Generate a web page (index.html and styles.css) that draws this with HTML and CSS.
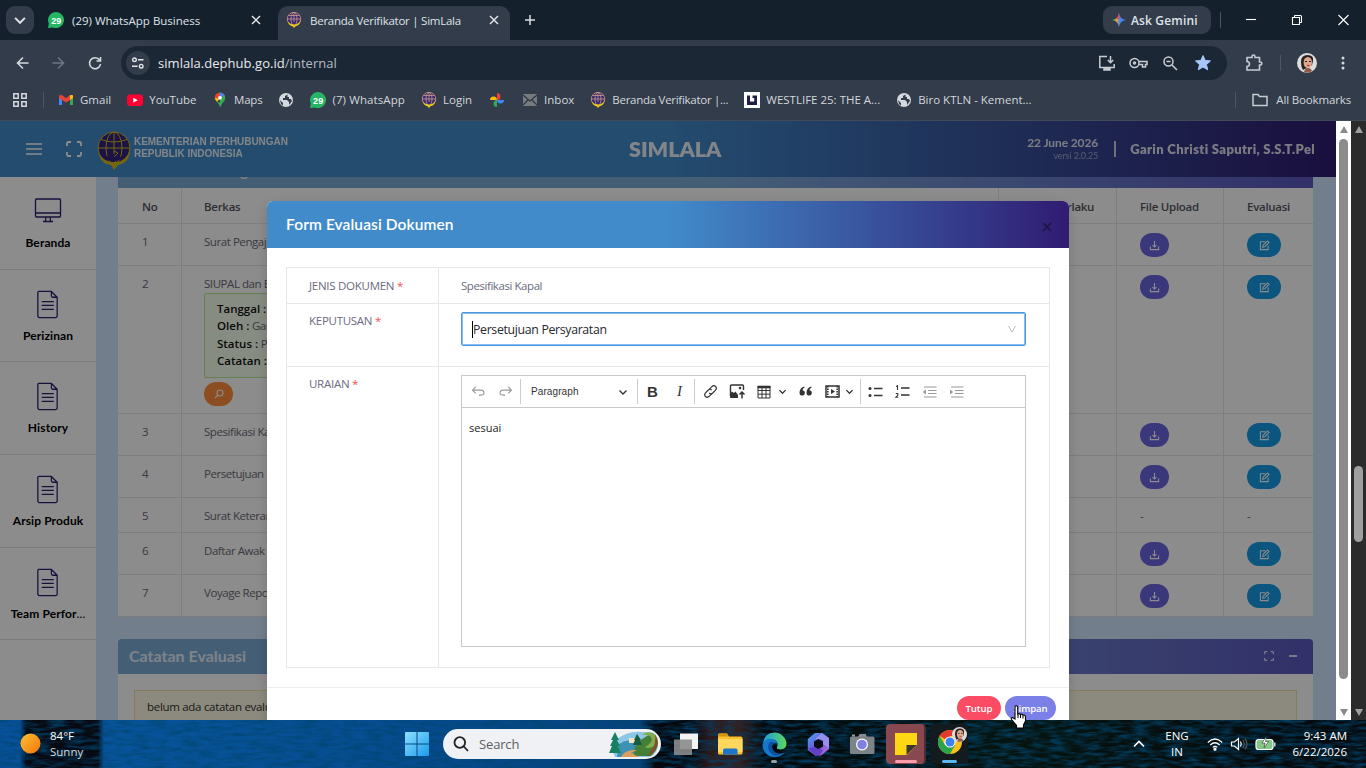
FILE: index.html
```html
<!DOCTYPE html>
<html lang="id">
<head>
    <meta charset="UTF-8">
    <title>Beranda Verifikator | SimLala</title>
    <link rel="stylesheet" href="styles.css">
</head>
<body>
    <!-- icons -->
    <svg class="defs" width="0" height="0">
        <defs>
            <linearGradient id="g-win" x1="0" y1="0" x2="1" y2="1"><stop offset="0" stop-color="#8fe0ff"/><stop offset="1" stop-color="#1a9bea"/></linearGradient>
            <linearGradient id="g-edge" x1="0" y1="0" x2="1" y2="0"><stop offset="0" stop-color="#1b9de2"/><stop offset="1" stop-color="#5fd65a"/></linearGradient>
            <linearGradient id="g-m365" x1="0" y1="0" x2="1" y2="1"><stop offset="0" stop-color="#4aa3f0"/><stop offset=".5" stop-color="#6a5bd8"/><stop offset="1" stop-color="#c46be0"/></linearGradient>
            <linearGradient id="g-gem" x1="0" y1="0" x2="1" y2="0"><stop offset="0" stop-color="#34a853"/><stop offset=".35" stop-color="#e8a33a"/><stop offset=".55" stop-color="#4285f4"/><stop offset="1" stop-color="#4285f4"/></linearGradient>
            <linearGradient id="g-sun" x1="0" y1="0" x2="1" y2="1"><stop offset="0" stop-color="#fcc02e"/><stop offset="1" stop-color="#f3750f"/></linearGradient>
        </defs>
        <symbol id="seal" viewBox="0 0 34 39">
            <circle cx="17" cy="17" r="16" fill="#33247d"/>
            <g fill="none" stroke="#d6b91c" stroke-width="1">
                <circle cx="17" cy="17" r="16"/>
                <ellipse cx="17" cy="17" rx="8" ry="16"/>
                <path d="M17 1v22M1 17h32M4 8.500q13 5 26 0"/>
                <path d="M17 20l4 2-4 4 3 3-4 4"/>
            </g>
            <path d="M1 19q2 14 13 15l3 5 4-5q12-2 12-16-3 12-14 13-14 1-18-12z" fill="#d6b91c"/>
            <path d="M5 24q5 7 13 6 8-1 12-8-3 4-9 4-8 0-16-2z" fill="#33247d"/>
        </symbol>
        <symbol id="seal-sm" viewBox="0 0 16 16">
            <circle cx="8" cy="7" r="6.700" fill="#3b2873"/>
            <g fill="none" stroke="#c99c86" stroke-width=".8">
                <circle cx="8" cy="7" r="6.700"/>
                <ellipse cx="8" cy="7" rx="3" ry="6.700"/>
                <path d="M8 0v10M1.300 7h13.400M2.500 3.500h11"/>
            </g>
            <path d="M1.500 9q1.500 5 5 5.300L8 16l1.500-1.700Q14.500 13 14.700 7.500q-1.500 4.500-6 5Q4 12.500 1.500 9z" fill="#e6c71c"/>
        </symbol>
        <symbol id="wa" viewBox="0 0 16 16">
            <path d="M8 0a8 8 0 1 1-3 15.400L0 16l.8-4.600A8 8 0 0 1 8 0z" fill="#25b564"/>
            <text x="8.200" y="11.500" text-anchor="middle" class="wa-num">29</text>
        </symbol>
        <symbol id="globe" viewBox="0 0 16 16">
            <circle cx="8" cy="8" r="7" fill="#d5d9df"/>
            <path d="M9.500 2.500 7 4v2H5v2h4l2 2v3l3-4-1-2h-2V5H9.500zM2 8l3 3v2.500L3 12z" fill="#323c4a"/>
        </symbol>
        <symbol id="close" viewBox="0 0 10 10"><path d="M1 1l8 8M9 1 1 9" fill="none" stroke="currentColor" stroke-width="1.500"/></symbol>
        <symbol id="doc" viewBox="0 0 24 30">
            <path d="M2.500 1.500h13l6 6V27a1.500 1.500 0 0 1-1.500 1.500H3A1.500 1.500 0 0 1 1.500 27V2.500a1 1 0 0 1 1-1zM15.500 1.500V6q0 1.500 1.500 1.500h4.500M5.500 12H18M5.500 16H18M5.500 20H18" fill="none" stroke="currentColor" stroke-width="1.300"/>
        </symbol>
        <symbol id="download" viewBox="0 0 12 12">
            <path d="M1.500 7v3.500h9V7M6 1v6.500M3.800 5.500 6 7.700l2.200-2.200" fill="none" stroke="currentColor" stroke-width="1.200"/>
        </symbol>
        <symbol id="edit" viewBox="0 0 12 12">
            <path d="M7 2H1.500v8.500H10V6M4 8l.5-2.200L9.300 1l1.700 1.700-4.800 4.800z" fill="none" stroke="currentColor" stroke-width="1.100"/>
        </symbol>
        <symbol id="full" viewBox="0 0 16 16">
            <path d="M1 5V2.500A1.500 1.500 0 0 1 2.500 1H5M11 1h2.500A1.500 1.500 0 0 1 15 2.500V5M15 11v2.500a1.500 1.500 0 0 1-1.500 1.500H11M5 15H2.500A1.500 1.500 0 0 1 1 13.500V11" fill="none" stroke="currentColor" stroke-width="1.800"/>
        </symbol>
        <symbol id="down" viewBox="0 0 10 10"><path d="M1.500 3.500 5 7l3.500-3.500" fill="none" stroke="currentColor" stroke-width="1.400"/></symbol>
        <symbol id="undo" viewBox="0 0 16 12"><path d="M5 1 1.500 4.500 5 8M1.500 4.500H10q4 0 4 3.200Q14 10 10 10H8.500" fill="none" stroke="currentColor" stroke-width="1.200"/></symbol>
        <symbol id="face" viewBox="0 0 20 20">
            <circle cx="10" cy="10" r="10" fill="#dcdcdc"/>
            <path d="M4 9q0-7 6.500-7T16 8l-1 4-9 5Q4 14 4 9z" fill="#2b211f"/>
            <ellipse cx="10.800" cy="9.500" rx="4.200" ry="5.600" fill="#dba98d"/>
            <path d="M7 19q1-4 4-4t4 3q-4 3-8 1z" fill="#8c5b48"/>
            <path d="M8 8.500h2M12 8.500h2" stroke="#2b211f"/>
            <path d="M10 12.500h2.500" stroke="#b9303c" stroke-width="1.200"/>
        </symbol>
    </svg>

    <!-- browser tabs -->
    <div class="tabs">
        <span class="tab-search"><svg width="14" height="14"><use href="#down"/></svg></span>
        <div class="tab">
            <svg width="16" height="16"><use href="#wa"/></svg>
            <span class="tab-title">(29) WhatsApp Business</span>
            <svg class="tab-x" width="10" height="10"><use href="#close"/></svg>
        </div>
        <div class="tab active">
            <svg width="16" height="16"><use href="#seal-sm"/></svg>
            <span class="tab-title">Beranda Verifikator | SimLala</span>
            <svg class="tab-x" width="10" height="10"><use href="#close"/></svg>
        </div>
        <svg class="tab-new" width="12" height="12" viewBox="0 0 12 12"><path d="M6 1v10M1 6h10" stroke="#d9dde3" stroke-width="1.500"/></svg>
        <div class="gemini">
            <svg width="14" height="14" viewBox="0 0 14 14"><path d="M7 0q.8 6.200 7 7-6.200.8-7 7-.8-6.200-7-7 6.200-.8 7-7z" fill="url(#g-gem)"/><path d="M7 0q-.6 4-3 5.500L7 6z" fill="#ea4335"/></svg>
            <span>Ask Gemini</span>
        </div>
        <i class="sep tab-sep"></i>
        <svg class="win-btns" width="104" height="14" viewBox="0 0 104 14" fill="none" stroke="#fff" stroke-width="1.100">
            <path d="M0 6.500h10"/>
            <path d="M46.500 4.500h7v7h-7zM48.500 4.500V3q0-.5.5-.5h5.500q1 0 1 1V9q0 .5-.5.5h-1.500"/>
            <path d="M92.500 2l10 10M102.500 2l-10 10"/>
        </svg>
    </div>

    <div class="toolbar">
        <svg class="nav" width="90" height="16" viewBox="0 0 90 16" fill="none" stroke="#d5d9df" stroke-width="1.600">
            <path d="M13.500 8h-11M8 2.500 2.500 8 8 13.500"/>
            <path d="M37.500 8h11M43 2.500 48.500 8 43 13.500" stroke="#6d7683"/>
            <path d="M84.500 5A5.500 5.500 0 1 0 85.500 9M85.500 2v4h-4"/>
        </svg>
        <div class="omnibox">
            <span class="site"><svg width="14" height="14" viewBox="0 0 14 14" fill="none" stroke="#e3e6ea" stroke-width="1.400"><circle cx="3.500" cy="3.800" r="1.800"/><path d="M7 3.800h5.500M1 10.200h5.500"/><circle cx="10.200" cy="10.200" r="1.800"/></svg></span>
            <span class="url">simlala.dephub.go.id<em>/internal</em></span>
            <svg class="omni-icons" width="114" height="18" viewBox="0 0 114 18" fill="none" stroke="#c7ccd3" stroke-width="1.500">
                <path d="M9 2.500H1.800v11h14.400V10M12.500 2v6.500M9.800 6l2.700 2.700L15.200 6"/><path d="M6 14.500h6v1.500H6z" fill="#c7ccd3"/>
                <circle cx="36.500" cy="9" r="4.500"/><circle cx="36.500" cy="9" r="1"/><path d="M41 7.500h8v3h-1.500V13h-3v-2.500H41"/>
                <circle cx="70.500" cy="7.500" r="4.500"/><path d="M74 11l5 5M68.500 7.500h4"/>
                <path d="M105 1.500l2.200 5 5.300.4-4 3.600 1.200 5.300-4.700-2.800-4.700 2.800 1.200-5.300-4-3.600 5.300-.4z" fill="#a8c7fa" stroke="#a8c7fa" stroke-width="1"/>
            </svg>
        </div>
        <svg class="ext" width="18" height="18" viewBox="0 0 18 18" fill="none" stroke="#c7ccd3" stroke-width="1.600"><path d="M2 3.500h5V2.500a1.500 1.500 0 0 1 3 0v1h4.500V8h.8a1.500 1.500 0 0 1 0 3h-.8v5H2v-3.500q2.500-.3 2.500-2.500T2 7.500z"/></svg>
        <i class="sep"></i>
        <svg class="avatar" width="20" height="20"><use href="#face"/></svg>
        <svg class="dots" width="4" height="14" viewBox="0 0 4 14" fill="#d5d9df"><circle cx="2" cy="2" r="1.500"/><circle cx="2" cy="7" r="1.500"/><circle cx="2" cy="12" r="1.500"/></svg>
    </div>

    <div class="bookmarks">
        <svg width="14" height="14" viewBox="0 0 14 14" fill="none" stroke="#d5d9df" stroke-width="1.500"><path d="M.8.8h4.400v4.400H.8zM8.800.8h4.400v4.400H8.800zM.8 8.800h4.400v4.400H.8zM8.800 8.800h4.400v4.400H8.800z"/></svg>
        <i class="sep bm-sep"></i>
        <span class="bm bm-gmail"><svg width="16" height="16" viewBox="0 0 16 16"><path d="M1 3.500V13h3V6z" fill="#4285f4"/><path d="M15 3.500V13h-3V6z" fill="#34a853"/><path d="M1 3.500 4 3l4 3.200L12 3l3 .5V6L8 10.500 1 6z" fill="#ea4335"/><path d="M12 3l3 .2V6l-3 2z" fill="#fbbc04"/></svg><b>Gmail</b></span>
        <span class="bm bm-yt"><svg width="16" height="16" viewBox="0 0 16 16"><rect y="2.500" width="16" height="11.500" rx="3" fill="#f03"/><path d="M6.300 5.700v5l4.500-2.500z" fill="#fff"/></svg><b>YouTube</b></span>
        <span class="bm bm-maps"><svg width="16" height="16" viewBox="0 0 16 16"><path d="M8 .5A5.300 5.300 0 0 1 13.300 6Q13 9 10.500 11L8 15.500z" fill="#34a853"/><path d="M8 .5A5.300 5.300 0 0 0 2.700 5.800L8 6z" fill="#ea4335"/><path d="M8 .5a5.300 5.300 0 0 1 4.600 2.700L8 6z" fill="#4285f4"/><path d="M2.700 5.800Q3 8 5 10l3-3.500z" fill="#fbbc04"/><path d="M5 10q2.500 2.500 3 5.500l1-5z" fill="#34a853"/><circle cx="8" cy="5.800" r="1.900" fill="#fff"/></svg><b>Maps</b></span>
        <span class="bm"><svg width="16" height="16"><use href="#globe"/></svg></span>
        <span class="bm bm-wa"><svg width="16" height="16"><use href="#wa"/></svg><b>(7) WhatsApp</b></span>
        <span class="bm bm-login"><svg width="16" height="16"><use href="#seal-sm"/></svg><b>Login</b></span>
        <span class="bm bm-photos"><svg width="16" height="16" viewBox="0 0 16 16"><path d="M8 8V1a3.500 3.500 0 0 1 0 7z" fill="#ea4335"/><path d="M8 8h7a3.500 3.500 0 0 1-7 0z" fill="#4285f4"/><path d="M8 8v7a3.500 3.500 0 0 1 0-7z" fill="#34a853"/><path d="M8 8H1a3.500 3.500 0 0 1 7 0z" fill="#fbbc04"/></svg></span>
        <span class="bm bm-inbox"><svg width="16" height="16" viewBox="0 0 16 16"><path d="M1 2h14v12H1z" fill="#777b80"/><path d="M1 3l7 6 7-6M1 13l5-5M15 13l-5-5" fill="none" stroke="#303741" stroke-width="1.200"/></svg><b>Inbox</b></span>
        <span class="bm bm-ber"><svg width="16" height="16"><use href="#seal-sm"/></svg><b>Beranda Verifikator |...</b></span>
        <span class="bm bm-west"><svg width="16" height="16" viewBox="0 0 16 16"><path d="M0 0h16v16H0z" fill="#fff"/><path d="M3 3.500h10V13H3z" fill="#1d1f45"/><path d="M6 3v6.500h4.200V6H8.500V3z" fill="#fff"/><path d="M7.300 3v5H9" fill="none" stroke="#fff" stroke-width="1.500"/></svg><b>WESTLIFE 25: THE A...</b></span>
        <span class="bm bm-biro"><svg width="16" height="16"><use href="#globe"/></svg><b>Biro KTLN - Kement...</b></span>
        <i class="sep bm-right"></i>
        <span class="bm bm-all"><svg width="16" height="14" viewBox="0 0 16 14" fill="none" stroke="#c7ccd3" stroke-width="1.500"><path d="M1 12.500V1.500h5l1.500 2H15v9z"/></svg><b>All Bookmarks</b></span>
    </div>

    <div class="viewport">
        <div class="page">
            <div class="head">
                <svg class="burger" width="16" height="12" viewBox="0 0 16 12"><path d="M0 1h16M0 6h16M0 11h16" stroke="currentColor" stroke-width="1.500"/></svg>
                <svg class="head-full" width="16" height="16"><use href="#full"/></svg>
                <svg class="head-logo" width="34" height="39"><use href="#seal"/></svg>
                <div class="ministry">KEMENTERIAN PERHUBUNGAN<br>REPUBLIK INDONESIA</div>
                <h1>SIMLALA</h1>
                <div class="date">22 June 2026<small>versi 2.0.25</small></div>
                <i class="bar"></i>
                <div class="user">Garin Christi Saputri, S.S.T.Pel</div>
            </div>
            <div class="main">
                <div class="side">
                    <a class="item"><svg width="28" height="29" viewBox="0 0 28 29"><path d="M2.500 2h23q1 0 1 1v16q0 1-1 1h-23q-1 0-1-1V3q0-1 1-1zM1.500 16h25M12 20l-.5 4M16 20l.5 4M9 24.500h10" fill="none" stroke="currentColor" stroke-width="1.300"/></svg><span>Beranda</span></a>
                    <a class="item"><svg width="24" height="29"><use href="#doc"/></svg><span>Perizinan</span></a>
                    <a class="item"><svg width="24" height="29"><use href="#doc"/></svg><span>History</span></a>
                    <a class="item"><svg width="24" height="29"><use href="#doc"/></svg><span>Arsip Produk</span></a>
                    <a class="item"><svg width="24" height="29"><use href="#doc"/></svg><span>Team Perfor<em>...</em></span></a>
                </div>
                <div class="content">
                    <div class="card-top"><span>Data Pendukung</span></div>
                    <div class="berkas">
                        <div class="row th"><b>No</b><b>Berkas</b><b>Masa Berlaku</b><b>File Upload</b><b>Evaluasi</b></div>
                        <div class="row"><span>1</span><span>Surat Pengajuan</span><span></span><span><i class="btn dl"><svg width="11" height="11"><use href="#download"/></svg></i></span><span><i class="btn ed"><svg width="11" height="11"><use href="#edit"/></svg></i></span></div>
                        <div class="row tall"><span>2</span>
                            <span>SIUPAL dan Bukti
                                <div class="note"><b>Tanggal :</b><br><b>Oleh :</b> Garin<br><b>Status :</b> Proses<br><b>Catatan :</b></div>
                                <i class="btn find"><svg width="10" height="10" viewBox="0 0 10 10" fill="none" stroke="currentColor" stroke-width="1.100"><circle cx="6" cy="4" r="3"/><path d="M4 6 1 9"/></svg></i>
                            </span>
                            <span></span><span><i class="btn dl"><svg width="11" height="11"><use href="#download"/></svg></i></span><span><i class="btn ed"><svg width="11" height="11"><use href="#edit"/></svg></i></span></div>
                        <div class="row"><span>3</span><span>Spesifikasi Kapal</span><span></span><span><i class="btn dl"><svg width="11" height="11"><use href="#download"/></svg></i></span><span><i class="btn ed"><svg width="11" height="11"><use href="#edit"/></svg></i></span></div>
                        <div class="row"><span>4</span><span>Persetujuan Syah</span><span></span><span><i class="btn dl"><svg width="11" height="11"><use href="#download"/></svg></i></span><span><i class="btn ed"><svg width="11" height="11"><use href="#edit"/></svg></i></span></div>
                        <div class="row short"><span>5</span><span>Surat Keterangan</span><span></span><span>-</span><span>-</span></div>
                        <div class="row"><span>6</span><span>Daftar Awak Kapal</span><span></span><span><i class="btn dl"><svg width="11" height="11"><use href="#download"/></svg></i></span><span><i class="btn ed"><svg width="11" height="11"><use href="#edit"/></svg></i></span></div>
                        <div class="row"><span>7</span><span>Voyage Report</span><span></span><span><i class="btn dl"><svg width="11" height="11"><use href="#download"/></svg></i></span><span><i class="btn ed"><svg width="11" height="11"><use href="#edit"/></svg></i></span></div>
                    </div>
                    <div class="catatan">
                        <div class="catatan-head"><h2>Catatan Evaluasi</h2><svg width="10" height="10"><use href="#full"/></svg><i class="minus"></i></div>
                        <div class="catatan-body"><div class="alert">belum ada catatan evaluasi</div></div>
                    </div>
                </div>
            </div>
            <div class="mask"></div>
            <div class="modal">
                <div class="modal-head"><h3>Form Evaluasi Dokumen</h3><svg width="10" height="10"><use href="#close"/></svg></div>
                <div class="modal-body">
                    <div class="form">
                        <div class="lab r1">JENIS DOKUMEN <i>*</i></div><div class="val r1 name">Spesifikasi Kapal</div>
                        <div class="lab">KEPUTUSAN <i>*</i></div>
                        <div class="val"><div class="select"><u class="caret"></u><span>Persetujuan Persyaratan</span><svg width="10" height="10" viewBox="0 0 10 10"><path d="M1.500 2 5 8l3.500-6" fill="none" stroke="#bfbfbf"/></svg></div></div>
                        <div class="lab">URAIAN <i>*</i></div>
                        <div class="val">
                            <div class="editor">
                                <div class="tools">
                                    <svg class="off" width="15" height="11"><use href="#undo"/></svg>
                                    <svg class="off flip" width="15" height="11"><use href="#undo"/></svg>
                                    <i class="ts"></i>
                                    <span class="para">Paragraph</span>
                                    <svg class="dd" width="10" height="10"><use href="#down"/></svg>
                                    <i class="ts"></i>
                                    <strong class="tb">B</strong>
                                    <em class="ti">I</em>
                                    <i class="ts"></i>
                                    <svg class="w15" width="15" height="15" viewBox="0 0 15 15" fill="none" stroke="currentColor" stroke-width="1.200"><path d="M6.300 5.200 8.800 2.700q2-1.800 3.700-.2t0 3.700L9.700 9q-1.700 1.500-3.500 0"/><path d="M8.700 9.800l-2.500 2.500q-2 1.800-3.700.2t0-3.700L5.300 6Q7 4.500 8.800 6"/></svg>
                                    <svg class="w17" width="17" height="15" viewBox="0 0 17 15"><path d="M1.500 12V2q0-1 1-1h11q1 0 1 1v4" fill="none" stroke="currentColor" stroke-width="1.400"/><path d="M1 13.500V10l2-2.500 2 1.500 1.500-1.500L9 11v3H1.500z" fill="currentColor"/><circle cx="11" cy="4" r="1.300" fill="currentColor"/><path d="M13 14.500v-6M10.500 10.500 13 8l2.500 2.500" fill="none" stroke="currentColor" stroke-width="1.500"/></svg>
                                    <svg class="w14" width="14" height="14" viewBox="0 0 14 14" fill="none" stroke="currentColor"><path d="M1 1.500h12v11.500H1zM1 5.500h12M1 9.200h12M5 3v10M9 3v10"/><path d="M.5 2h13" stroke-width="2.600"/></svg>
                                    <svg class="dd2" width="9" height="9"><use href="#down"/></svg>
                                    <svg class="w13" width="13" height="11" viewBox="0 0 13 11" fill="currentColor"><path d="M5.500.5Q.5 1.500.5 7a2.700 2.700 0 1 0 3-2.800Q3.500 2.500 5.500 1.500zM12.500.5q-5 1-5 6.500a2.700 2.700 0 1 0 3-2.800q0-1.700 2-2.700z"/></svg>
                                    <svg class="w15b" width="15" height="13" viewBox="0 0 15 13"><path d="M1 1h13v11H1z" fill="none" stroke="currentColor" stroke-width="1.500"/><path d="M2.800 1v11M12.200 1v11" stroke="currentColor" stroke-width="1.600" stroke-dasharray="1.500 1"/><path d="M6 4v5l4-2.500z" fill="currentColor"/></svg>
                                    <svg class="dd2 dd3" width="9" height="9"><use href="#down"/></svg>
                                    <i class="ts"></i>
                                    <svg class="w15c" width="15" height="12" viewBox="0 0 15 12"><path d="M6 2.500h8.500M6 9.500h8.500" stroke="currentColor" stroke-width="1.400"/><circle cx="2" cy="2.500" r="1.500" fill="currentColor"/><circle cx="2" cy="9.500" r="1.500" fill="currentColor"/></svg>
                                    <svg class="w15c" width="15" height="13" viewBox="0 0 15 13"><path d="M6 3h8.500M6 10h8.500" stroke="currentColor" stroke-width="1.400"/><path d="M1 1.500l1.500-.7V5M.8 8.500h2v1.800l-2 1.900h2.400" fill="none" stroke="currentColor" stroke-width="1.100"/></svg>
                                    <svg class="w15c off" width="15" height="12" viewBox="0 0 15 12"><path d="M2 1h12.500M6 4.500h8.500M6 7.500h8.500M2 11h12.500" stroke="currentColor" stroke-width="1.200"/><path d="M4 3.500v5L.8 6z" fill="currentColor"/></svg>
                                    <svg class="w15c off" width="15" height="12" viewBox="0 0 15 12"><path d="M2 1h12.500M6 4.500h8.500M6 7.500h8.500M2 11h12.500" stroke="currentColor" stroke-width="1.200"/><path d="M1 3.500v5L4.200 6z" fill="currentColor"/></svg>
                                </div>
                                <div class="edit-area">sesuai</div>
                            </div>
                        </div>
                    </div>
                </div>
                <div class="modal-foot"><button class="tutup">Tutup</button><button class="simpan">Simpan</button></div>
            </div>
        </div>
        <div class="scroll inner"><i class="up"></i><i class="thumb"></i><i class="dn"></i></div>
        <div class="scroll outer"><i class="up"></i><i class="thumb"></i><i class="dn"></i></div>
    </div>

    <div class="taskbar">
        <svg class="wall" width="1366" height="48">
            <filter id="waves" x="0" y="0" width="100%" height="100%"><feTurbulence type="fractalNoise" baseFrequency=".06 .3" numOctaves="3" seed="4"/><feColorMatrix values="0 0 0 0 0  0 0 0 0 .06  0 0 0 0 .16  1.800 0 0 0 -.65"/></filter>
            <rect width="1366" height="48" filter="url(#waves)"/>
        </svg>
        <svg class="sun" width="21" height="21"><circle cx="10.500" cy="10.500" r="10" fill="url(#g-sun)"/></svg>
        <div class="weather">84°F<small>Sunny</small></div>
        <svg class="win" width="24" height="24" viewBox="0 0 24 24" fill="url(#g-win)"><path d="M0 1q0-1 1-1h10.500v11.500H0zM12.500 0H23q1 0 1 1v10.500H12.500zM0 12.500h11.500V24H1q-1 0-1-1zM12.500 12.500H24V23q0 1-1 1H12.500z"/></svg>
        <div class="search">
            <svg width="16" height="16" viewBox="0 0 16 16" fill="none" stroke="#222" stroke-width="1.800"><circle cx="6.800" cy="6.500" r="5.300"/><path d="M10.800 10.500 15 15"/></svg>
            <span>Search</span>
            <svg class="scene" width="50" height="28" viewBox="0 0 50 28">
                <path d="M8 9Q20 0 34 2h8q7 3 7 12t-8 13H6L3 20z" fill="#8cc7e8"/>
                <path d="M10 14q8-6 16-2l4 8-12 7H8z" fill="#3d91b5"/>
                <path d="M20 8h8v5h-8z" fill="#f4e3c0"/>
                <path d="M26 17q4-8 18-14 5 4 5 10t-7 13H24z" fill="#437f36"/>
                <path d="M33 5q5-5 12-1 4 4 3 10-8 6-12 3 9-5 6-10-4-3-9-2z" fill="#82ad4d"/>
                <path d="M12 27q4-8 16-7l-6 3 8 4z" fill="#dc9d5d"/>
                <path d="M46 4q5 8 0 17-4 4-8 5 10-9 8-22z" fill="#8a4c26"/>
                <path d="M6 2 2 10h2l-3 6h2l-3 7h12l-3-7h2L8 10h2z" fill="#178062"/>
                <path d="M28 4l-3 6h1l-2 5h9l-2-5h1z" fill="#195b42"/>
            </svg>
        </div>
        <svg class="app a-view" width="24" height="24" viewBox="0 0 24 24"><path d="M6 1.500h18v15.500H6z" fill="#f3f3f3"/><path d="M0 7.500h18V23H0z" fill="#8b8b8b" opacity=".9"/></svg>
        <svg class="app a-folder" width="25" height="24" viewBox="0 0 25 24"><path d="M0 3q0-1.500 1.500-1.500H9l2 3h12q1.500 0 1.500 1.500v15q0 1.500-1.500 1.500H1.500Q0 22.500 0 21z" fill="#f7c02c"/><path d="M0 3q0-1.500 1.500-1.500H9l1.500 3H0z" fill="#d8940e"/><path d="M0 7h24.500v13H0z" fill="#ffd75e"/><path d="M5 22.500V18q0-1.500 1.500-1.500H18q1.500 0 1.500 1.500v4.500z" fill="#1b76c9"/></svg>
        <div class="a-edge"><svg width="25" height="25" viewBox="0 0 25 25">
            <path d="M12.500.5A12 12 0 0 1 24.500 11.500q0 5.500-6 6-4.500 0-3.500-2.500 2-4-1.500-6.500Q7 5 1 11 2.500.5 12.500.5z" fill="url(#g-edge)"/>
            <path d="M1 11Q5 5.500 10.500 7q5 1.500 5 5.500-1-2.500-3.500-1.500-3 2-1.500 6 2.500 6 9.500 4.500l2.500-1q-3.500 4.500-10 4.500A12 12 0 0 1 .5 13z" fill="#1279cd"/>
            <path d="M6.500 12q2-3.500 5.500-1.500-3 2-1.500 6.500 2.500 6 9.500 4.500-3.500 3-8 2Q5 20 6.500 12z" fill="#0f4f9b"/>
        </svg></div>
        <svg class="app a-m365" width="23" height="24" viewBox="0 0 23 24"><path d="M8 1h7l7 5v11l-8 6.500H8L.8 18V7z" fill="url(#g-m365)"/><path d="M15 1l7 5v10l-6-4V8L8 7z" fill="#a5a3f5" opacity=".7"/><path d="M1 16l7-1 8 3-3 5.500H8z" fill="#5c38bd" opacity=".8"/><path d="M11.500 7 16 9.500v5L11.500 17 7 14.500v-5z" fill="#080b12"/></svg>
        <svg class="app a-cam" width="25" height="22" viewBox="0 0 25 22"><path d="M8 4l1.500-3h6L17 4z" fill="#878d92"/><rect y="3.500" width="24.500" height="17.500" rx="1.500" fill="#7d8489"/><path d="M2 1.500h3v2H2z" fill="#999"/><circle cx="12" cy="11.500" r="6" fill="#fff"/><circle cx="12" cy="11.500" r="4.800" fill="#7f80e0"/></svg>
        <div class="note-app"><svg width="22" height="22" viewBox="0 0 22 22"><path d="M0 0h22v12L12 22H0z" fill="#fdd614"/><path d="M11.500 12H22L11.500 22z" fill="#3b3932"/></svg></div>
        <div class="chrome-app">
            <svg width="30" height="28" viewBox="0 0 30 28"><circle cx="12" cy="15" r="12" fill="#fbc116"/><path d="M12 15 1.600 9A12 12 0 0 1 22.400 9H12z" fill="#e33b2e"/><path d="M1.600 9A12 12 0 0 0 12 27l5.200-9L12 15 7 18z" fill="#2ba24c"/><circle cx="12" cy="15" r="5.600" fill="#fff"/><circle cx="12" cy="15" r="4.500" fill="#3c82ee"/><svg x="14" y="0" width="15" height="15"><use href="#face"/></svg></svg>
        </div>
        <svg class="chev" width="12" height="8" viewBox="0 0 12 8"><path d="M1 6.500 6 1.500l5 5" fill="none" stroke="#fff" stroke-width="1.600"/></svg>
        <div class="lang">ENG<br>IN</div>
        <svg class="tray" width="70" height="16" viewBox="0 0 70 16" fill="none" stroke="#fff" stroke-width="1.200">
            <path d="M.8 6.500q7.200-7 14.400 0M3.300 9q4.700-4.500 9.400 0M5.700 11.400q2.300-2.200 4.600 0"/><circle cx="8" cy="13.200" r="1" fill="#fff"/>
            <path d="M24.500 6h3l4-3.500v11L27.500 10h-3zM33.500 5.500q1.500 2.500 0 5"/><path d="M35.800 4q3 4 0 8M38 2.500q4 5.500 0 11" stroke="#555"/>
            <rect x="49" y="3.500" width="17" height="10" rx="2.500" fill="#85c786"/><path d="M67.800 6.500v4"/><path d="M59.500 0 55 7h3l-1 5 4.500-6.500h-3z" fill="#fff" stroke="#111" stroke-width=".5"/>
        </svg>
        <div class="clock">9:43 AM<br>6/22/2026</div>
    </div>

    <svg class="cursor" width="17" height="24" viewBox="0 0 17 24"><path d="M5 1.500q1.500-1.500 2.700 0V9l1-.5 1.600.8 1.200-.3 1.300 1 1.500 0q1.200.5 1.200 2V16l-2 4v3H6.500v-2.500L1.500 14.500q-.8-2 1-2L5 14z" fill="#fff" stroke="#000" stroke-width="1.100"/><path d="M8 9v4M10.500 9.500V13M13 10v3.500" stroke="#000"/></svg>
</body>
</html>
```
FILE: styles.css
```css
*{
    margin: 0;
    padding: 0;
    box-sizing: border-box;
}
body{
    width: 1366px;
    height: 768px;
    display: flex;
    flex-direction: column;
    position: relative;
    overflow: hidden;
    background: #15202d;
    font-family: "Open Sans", "Noto Sans", sans-serif;
    font-size: 11.5px;
    white-space: nowrap;
}
svg{
    display: block;
    flex: none;
}
.defs{
    position: absolute;
}
.wa-num{
    font: bold 9px "Liberation Sans", sans-serif;
    fill: #fff;
}
em, i{
    font-style: normal;
}
.sep{
    width: 1px;
    height: 16px;
    background: #4b5564;
}

/* browser */
.tabs{
    height: 40px;
    flex: none;
    display: flex;
    align-items: center;
    background: #15202d;
    color: #dfe3e8;
}
.tab-search{
    width: 28px;
    height: 28px;
    margin-left: 6px;
    border-radius: 9px;
    background: #323c4a;
    display: flex;
    align-items: center;
    justify-content: center;
}
.tab{
    width: 244px;
    height: 34px;
    display: flex;
    align-items: center;
    padding-left: 14px;
    gap: 8px;
}
.tab.active{
    width: 232px;
    padding-left: 8px;
    align-self: flex-end;
    background: #323c4a;
    border-radius: 10px 10px 0 0;
    padding-bottom: 6px;
    letter-spacing: -.25px;
}
.tab-x{
    margin-left: auto;
    margin-right: 17px;
}
.active .tab-x{
    margin-right: 11px;
}
.tab-new{
    margin-left: 14px;
}
.gemini{
    margin-left: auto;
    width: 108px;
    height: 28px;
    border-radius: 9px;
    background: #323c4a;
    display: flex;
    align-items: center;
    gap: 5px;
    padding-left: 9px;
    font-size: 12px;
    font-weight: 600;
    letter-spacing: .15px;
}
.tab-sep{
    margin-left: 9px;
}
.win-btns{
    margin: 0 16px 0 25px;
}
.toolbar{
    height: 40px;
    flex: none;
    display: flex;
    align-items: center;
    background: #323c4a;
    padding-top: 6px;
}
.nav{
    margin-left: 15px;
}
.omnibox{
    width: 1106px;
    height: 34px;
    margin-left: 16px;
    border-radius: 17px;
    background: #1c2735;
    display: flex;
    align-items: center;
    padding-left: 5px;
}
.site{
    width: 24px;
    height: 24px;
    border-radius: 50%;
    background: #323c4a;
    display: flex;
    align-items: center;
    justify-content: center;
}
.url{
    margin-left: 8px;
    font-size: 13px;
    letter-spacing: .04px;
    color: #e8eaee;
}
.url em{
    color: #b4bac3;
}
.omni-icons{
    margin-left: auto;
    margin-right: 15px;
}
.ext{
    margin: 0 17px 0 18px;
}
.avatar{
    margin: 0 24px 0 16px;
}
.bookmarks{
    height: 41px;
    flex: none;
    display: flex;
    align-items: center;
    background: #323c4a;
    padding: 0 15px 1px 13px;
    color: #d3d7dd;
    border-bottom: 1px solid #414a56;
}
.bm-sep{
    margin: 0 0 0 16px;
}
.bm{
    display: flex;
    align-items: center;
    gap: 6px;
    margin-left: 16px;
}
.bm b{
    font-weight: normal;
}
.bm-gmail{
    margin-left: 14px;
}
.bm-maps{
    letter-spacing: -.2px;
    margin-left: 15.500px;
}
.bm-wa{
    letter-spacing: .1px;
}
.bm-photos, .bm-inbox{
    margin-left: 17px;
}
.bm-ber{
    letter-spacing: -.28px;
}
.bm-all b{
    letter-spacing: -.15px;
}
.bm-right{
    margin-left: auto;
}
.bm-all{
    gap: 8px;
}

/* page */
.viewport{
    height: 599px;
    flex: none;
    display: flex;
}
.page{
    width: 1336px;
    height: 599px;
    position: relative;
    overflow: hidden;
    background: #cfe6ff;
}
.head{
    height: 56px;
    display: flex;
    align-items: center;
    background: linear-gradient(90deg, #418bca 50%, #301c72 100%);
    color: #fff;
    font-family: "Lato", sans-serif;
}
.burger{
    margin-left: 26px;
}
.head-full{
    margin-left: 24px;
}
.head-logo{
    margin-left: 15px;
    margin-top: 3px;
}
.ministry{
    width: 495px;
    margin: -3px 0 0 3px;
    font: bold 10px/12px "Liberation Sans", sans-serif;
    letter-spacing: -.05px;
    opacity: .9;
}
.head h1{
    font-size: 21.500px;
    font-weight: 800;
    opacity: .9;
}
.date{
    margin-left: auto;
    text-align: right;
    font-size: 12px;
    font-weight: bold;
    letter-spacing: -.1px;
    line-height: 14px;
    opacity: .85;
}
.date small{
    display: block;
    font-size: 9px;
    font-weight: normal;
    line-height: 12px;
    opacity: .6;
}
.bar{
    width: 2px;
    height: 16px;
    margin: 0 14px 0 16px;
    background: #ccd;
}
.user{
    margin-right: 21px;
    font-size: 13px;
    font-weight: 800;
    letter-spacing: .36px;
    opacity: .85;
}
.main{
    display: flex;
    height: 543px;
}
.side{
    width: 96px;
    background: #fff;
    color: #2a1f70;
}
.item{
    height: 92.700px;
    border-bottom: 1px solid #e0e0e0;
    display: flex;
    flex-direction: column;
    align-items: center;
    padding-top: 20px;
}
.item span{
    margin-top: 8px;
    font: bold 12px/18px "Lato", sans-serif;
    letter-spacing: .1px;
    color: #000;
}
.item em{
    font-weight: normal;
}
.content{
    width: 1195px;
    margin-left: 22px;
}
.card-top{
    height: 11px;
    overflow: hidden;
    background: linear-gradient(90deg, #7cabd7 50%, #5b58bf 100%);
    color: #dce8f3;
    font: bold 16px/17px "Lato", sans-serif;
}
.card-top span{
    display: block;
    margin: -16px 0 0 12px;
}
.berkas{
    background: #fff;
    color: #6a6a74;
    height: 429px;
    letter-spacing: -.44px;
}
.row{
    display: grid;
    grid-template-columns: 64px 817px 118px 107px 89px;
    height: 42px;
    border-bottom: 1px solid #e6e6e6;
    line-height: 17.600px;
}
.row > *{
    padding: 9px 0 0 23px;
    border-right: 1px solid #e6e6e6;
}
.row > :first-child{
    padding-left: 24px;
}
.row > :nth-child(2){
    padding-left: 22px;
}
.row > :last-child{
    border-right: none;
}
.th{
    height: 36px;
    color: #55555e;
    letter-spacing: -.28px;
}
.th > *{
    padding-top: 10px;
    font-weight: 600;
}
.tall{
    height: 148px;
}
.short{
    height: 35px;
}
.btn{
    display: flex;
    align-items: center;
    justify-content: center;
    width: 29px;
    height: 24px;
    border-radius: 12px;
    color: #fff;
}
.dl{
    background: #6a65e0;
}
.ed{
    width: 34px;
    background: #149be8;
}
.find{
    margin-top: 4px;
    background: #ff8f3c;
}
.note{
    width: 400px;
    height: 85px;
    padding: 6px 12px;
    border: 1px solid #b7eb8f;
    border-radius: 2px;
    background: #f6ffed;
}
.note b{
    color: #111;
    font-weight: 600;
    letter-spacing: 0;
}
.catatan{
    margin-top: 22px;
}
.catatan-head{
    height: 35px;
    display: flex;
    align-items: center;
    padding: 0 16px 2px 11px;
    border-radius: 4px 4px 0 0;
    background: linear-gradient(90deg, #7cabd7 50%, #5b58bf 100%);
    color: #e6eff8;
}
.catatan h2{
    font: bold 16px "Lato", sans-serif;
    margin-right: auto;
}
.minus{
    width: 8px;
    height: 2px;
    margin-left: 15px;
    background: #dde;
}
.catatan-body{
    height: 60px;
    padding: 16px 16px 0;
    background: #fff;
}
.alert{
    height: 60px;
    padding: 8px 12px;
    border: 1px solid #f3e2a4;
    background: #fffbe6;
    color: #333;
    letter-spacing: -.3px;
}
.mask{
    position: absolute;
    inset: 0;
    background: rgba(0, 0, 0, .45);
}

/* modal */
.modal{
    position: absolute;
    left: 267px;
    top: 80px;
    width: 802px;
    height: 540px;
    border-radius: 6px;
    background: #fff;
    box-shadow: 0 4px 12px rgba(0, 0, 0, .15);
    overflow: hidden;
}
.modal-head{
    height: 47px;
    display: flex;
    align-items: center;
    justify-content: space-between;
    padding: 0 17px 0 19px;
    background: linear-gradient(90deg, #418bca 50%, #301c72 100%);
    color: #1c143f;
}
.modal-head h3{
    font: 600 15.500px "Lato", sans-serif;
    letter-spacing: .1px;
    margin-top: -1px;
    color: #fff;
}
.modal-head svg{
    margin-top: 4px;
}
.modal-body{
    padding: 19px 19px 0;
}
.form{
    width: 764px;
    display: grid;
    grid-template-columns: 152px 1fr;
    grid-template-rows: 36px 63px 301px;
    border: 1px solid #e8e8e8;
    border-bottom: none;
    color: #6b6b80;
}
.form > div{
    padding: 8px 23px 0 22px;
    border-bottom: 1px solid #e8e8e8;
}
.form > .lab{
    padding-top: 9px;
    border-right: 1px solid #e8e8e8;
    letter-spacing: -.27px;
}
.form > .r1{
    padding-top: 10px;
}
.name{
    letter-spacing: -.44px;
}
.lab i{
    color: #f05252;
}
.select{
    width: 565px;
    height: 34px;
    display: flex;
    align-items: center;
    border: 1px solid #4b96de;
    border-radius: 2px;
    box-shadow: inset 0 0 0 1px #85bdf0;
    color: #26262c;
    font-size: 12.300px;
    letter-spacing: -.32px;
}
.caret{
    width: 1px;
    height: 17px;
    margin-left: 10px;
    background: #000;
}
.select svg{
    margin-left: auto;
    margin-right: 8px;
}
.editor{
    width: 565px;
    height: 272px;
    border: 1px solid #c9c9c9;
    color: #333;
}
.tools{
    height: 32px;
    display: flex;
    align-items: center;
    border-bottom: 1px solid #c9c9c9;
    padding-left: 9px;
    font-family: "Liberation Sans", sans-serif;
}
.off{
    color: #999;
}
.flip{
    transform: scaleX(-1);
    margin-left: 12px;
}
.ts{
    width: 1px;
    height: 25px;
    margin-left: 7px;
    background: #ccc;
}
.para{
    width: 87px;
    margin-left: 10px;
    font-size: 10px;
    letter-spacing: .1px;
}
.dd + .ts{
    margin-left: 9px;
}
.tb{
    width: 13px;
    margin-left: 9px;
    font-size: 15px;
}
.ti{
    width: 10px;
    margin-left: 17px;
    font: italic 15px "Liberation Serif", serif;
}
.ti + .ts{
    margin-left: 7px;
}
.w15{
    margin-left: 8px;
}
.w17{
    margin-left: 11px;
}
.w14{
    margin-left: 11px;
}
.dd2{
    margin-left: 7px;
}
.w13{
    margin-left: 12px;
}
.w15b{
    margin-left: 13px;
}
.dd3{
    margin-left: 5px;
}
.dd2 + .ts{
    margin-left: 6px;
}
.w15c{
    margin-left: 12px;
}
.ts + .w15c{
    margin-left: 7px;
}
.edit-area{
    padding: 12px 7px;
    font-size: 11px;
    color: #222;
}
.modal-foot{
    margin-top: 19px;
    border-top: 1px solid #eee;
    display: flex;
    justify-content: flex-end;
    gap: 4px;
    padding: 8px 13px 0 0;
}
.modal-foot button{
    height: 24px;
    border: none;
    border-radius: 12px;
    color: #fff;
    font: 600 9.600px "Open Sans", sans-serif;
    letter-spacing: -.1px;
}
.tutup{
    width: 44px;
    background: #fb4c64;
}
.simpan{
    width: 51px;
    background: #7b80e8;
}

/* scrollbars */
.scroll{
    width: 15px;
    display: flex;
    flex-direction: column;
    align-items: center;
    padding: 5px 0 4px;
    background: #fff;
    color: #8b8b8b;
}
.thumb{
    width: 9px;
    height: 540px;
    margin-top: 6px;
    border-radius: 5px;
    background: #8b8b8b;
}
.up, .dn{
    border: 4px solid transparent;
}
.up{
    border-bottom: 7px solid currentColor;
    border-top: none;
}
.dn{
    margin-top: auto;
    border-top: 7px solid currentColor;
    border-bottom: none;
}
.outer{
    background: #2b2b2b;
    color: #9f9f9f;
}
.outer .thumb{
    height: 76px;
    margin-top: 333px;
    background: #9f9f9f;
}

/* taskbar */
.taskbar{
    height: 48px;
    flex: none;
    position: relative;
    display: flex;
    align-items: center;
    color: #fff;
    background: linear-gradient(90deg, #07509a 0 20px, #070a12 26px 98px, #07549c 104px, #064c90 400px, #07427c 640px, #05070c 655px 690px, #2a1b1d 710px, #33201f 740px, #04080b 765px, #06140f 1000px, #05090d);
}
.taskbar > *{
    position: relative;
}
.taskbar > .wall{
    position: absolute;
    left: 0;
    top: 0;
}
.sun{
    margin-left: 20px;
    margin-top: -2px;
}
.weather{
    width: 355px;
    margin-left: 9px;
    line-height: 16px;
}
.weather small{
    display: block;
    font-size: 11.500px;
    color: #d5d9de;
}
.search{
    width: 218px;
    height: 30px;
    margin-left: 14px;
    border-radius: 15px;
    background: #eff1f4;
    color: #5b5d61;
    display: flex;
    align-items: center;
    padding: 0 2px 0 10px;
    font-size: 13px;
}
.search span{
    margin-left: 10px;
    letter-spacing: -.15px;
}
.scene{
    margin-left: auto;
    border-radius: 0 14px 14px 0;
}
.a-view{
    margin-left: 13px;
}
.a-folder{
    margin-left: 20px;
}
.a-edge{
    margin-left: 19px;
}
.a-edge::after{
    content: "";
    position: absolute;
    left: 9px;
    bottom: -6px;
    width: 6px;
    height: 3px;
    border-radius: 2px;
    background: #9a9da0;
}
.a-m365{
    margin-left: 20px;
}
.a-cam{
    margin-left: 20px;
}
.note-app{
    width: 40px;
    height: 40px;
    margin-left: 11px;
    padding: 9px;
    border-radius: 4px;
    border-right: 2px solid #4d2b31;
    background: #874850;
}
.chrome-app{
    width: 38px;
    height: 40px;
    margin-left: 4px;
    padding: 3px 0 0 8px;
    border-radius: 4px;
    background: #141b1f;
}
.chrome-app::after, .note-app::after{
    content: "";
    position: absolute;
    left: 12px;
    bottom: 1px;
    width: 15px;
    height: 3px;
    border-radius: 2px;
    background: #5bb8ec;
}
.note-app::after{
    left: 9px;
    width: 22px;
    background: #ff9cab;
}
.chev{
    margin-left: auto;
}
.lang{
    width: 30px;
    margin-left: 17px;
    line-height: 16px;
    text-align: center;
}
.tray{
    margin-left: 15px;
}
.clock{
    width: 62px;
    margin: 0 19px 0 8px;
    line-height: 16px;
    text-align: right;
}
.cursor{
    position: absolute;
    left: 1010px;
    top: 705px;
}
```
